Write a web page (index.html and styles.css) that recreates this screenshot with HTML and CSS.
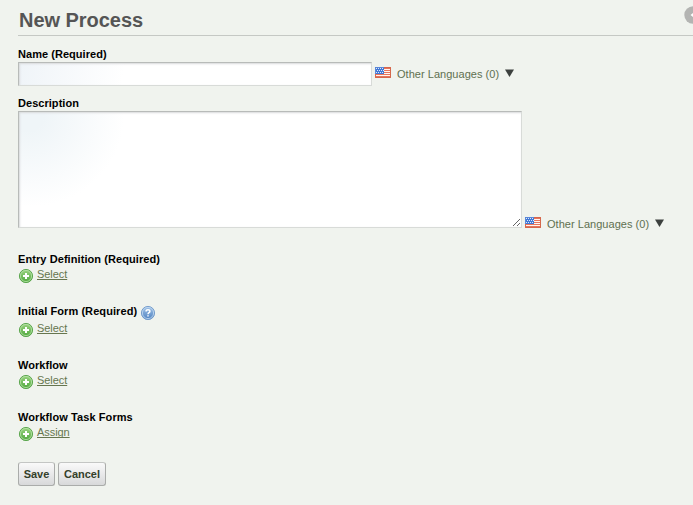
FILE: index.html
```html
<!DOCTYPE html>
<html lang="en">
<head>
<meta charset="utf-8">
<title>New Process</title>
<link rel="stylesheet" href="styles.css">
</head>
<body>
<svg class="defs" width="0" height="0" aria-hidden="true">
  <defs>
    <linearGradient id="green" x1="0" y1="0" x2="0" y2="1"><stop offset="0" stop-color="#9bd482"/><stop offset="1" stop-color="#4fa83d"/></linearGradient>
    <linearGradient id="blue" x1="0" y1="0" x2="0" y2="1"><stop offset="0" stop-color="#a4c5e8"/><stop offset="1" stop-color="#4d80c0"/></linearGradient>
    <symbol id="add" viewBox="0 0 16 16">
      <circle cx="8" cy="8" r="6.6" fill="url(#green)" stroke="#54a146" stroke-width=".9"/>
      <circle cx="8" cy="8" r="5.6" fill="none" stroke="#b9e2ab" stroke-width=".8"/>
      <path d="M8 5v6M5 8h6" stroke="#fff" stroke-width="2"/>
    </symbol>
    <symbol id="help" viewBox="0 0 16 16">
      <circle cx="8" cy="8" r="6.6" fill="url(#blue)" stroke="#6f98ca" stroke-width=".9"/>
      <circle cx="8" cy="8" r="5.6" fill="none" stroke="#c4daf1" stroke-width=".8"/>
      <path d="M6.1 6.5C6.1 4.3 9.9 4.3 9.9 6.5C9.9 7.8 8 7.7 8 9.2M8 10.2V11.6" fill="none" stroke="#fff" stroke-width="1.5"/>
    </symbol>
    <symbol id="flag" viewBox="0 0 16 11">
      <path fill="#e8735c" d="M0 0h16v11H0z"/>
      <path d="M1 2.5h14M1 4.5h14M1 6.5h14M1 8.5h14" stroke="#fff5ee"/>
      <path fill="#4277d5" d="M0 0h9v7H0z"/>
      <path d="M1 1.5h8M2 3.5h7M1 5.5h8" stroke="#dce8fb" stroke-dasharray="1 1"/>
      <path d="M.5 7v3.5h15V.5H9" fill="none" stroke="#d4674b"/>
      <path d="M.5 7V.5H9" fill="none" stroke="#5b88d8"/>
    </symbol>
    <symbol id="down" viewBox="0 0 9 8"><path d="M0 .5h9L4.5 8z" fill="#3c403e"/></symbol>
  </defs>
</svg>
<header class="header">
  <h1>New Process</h1>
  <svg class="back" viewBox="0 0 18 18"><circle cx="9" cy="9" r="8.7" fill="#b3b4b2"/><path d="M6.5 9l5-4v8z" fill="#fff"/></svg>
</header>
<form class="form">
  <div class="field name">
    <label for="name">Name (Required)</label>
    <div class="control">
      <input id="name" type="text">
      <svg class="flag"><use href="#flag"/></svg>
      <span class="lang">Other Languages (0)</span>
      <svg class="down"><use href="#down"/></svg>
    </div>
  </div>
  <div class="field description">
    <label for="desc">Description</label>
    <div class="control">
      <textarea id="desc"></textarea>
      <svg class="flag"><use href="#flag"/></svg>
      <span class="lang">Other Languages (0)</span>
      <svg class="down"><use href="#down"/></svg>
    </div>
  </div>
  <div class="field">
    <label class="wide">Entry Definition (Required)</label>
    <div class="action"><svg class="icon"><use href="#add"/></svg><a href="#">Select</a></div>
  </div>
  <div class="field initial">
    <div class="titled"><label class="wide">Initial Form (Required)</label><svg class="icon"><use href="#help"/></svg></div>
    <div class="action"><svg class="icon"><use href="#add"/></svg><a href="#">Select</a></div>
  </div>
  <div class="field">
    <label>Workflow</label>
    <div class="action"><svg class="icon"><use href="#add"/></svg><a href="#">Select</a></div>
  </div>
  <div class="field">
    <label class="wide">Workflow Task Forms</label>
    <div class="action"><svg class="icon"><use href="#add"/></svg><a href="#">Assign</a></div>
  </div>
  <div class="buttons"><button class="save" type="button">Save</button><button class="cancel" type="button">Cancel</button></div>
</form>
</body>
</html>
```
FILE: styles.css
```css
* { box-sizing: border-box; }
body {
  margin: 0;
  height: 505px;
  overflow: hidden;
  background: #f0f3ee;
  color: #000;
  font: 11px/14px "Liberation Sans", Arial, sans-serif;
}
svg { display: block; flex: none; }
.defs { position: absolute; }
.header {
  display: flex;
  justify-content: space-between;
  height: 36px;
  margin-left: 18px;
  border-bottom: 1px solid #c5c8c4;
}
h1 {
  margin: 9px 0 0 1px;
  font-size: 20px;
  line-height: 22px;
  letter-spacing: -0.04px;
  color: #555;
  white-space: nowrap;
}
.back { width: 18px; height: 18px; margin: 6px -9px 0 0; }
.form { padding: 11px 0 0 18px; }
.field { height: 52px; }
.name { height: 49px; }
.description { height: 156px; }
.initial { height: 54px; }
label { display: block; width: max-content; height: 15px; font-weight: bold; letter-spacing: 0.04px; white-space: nowrap; }
.wide { letter-spacing: 0.08px; }
.control { display: flex; }
input, textarea {
  display: block;
  flex: none;
  margin: 0;
  border: 1px solid #d8dbd8;
  border-top-color: #b8bbb9;
  border-left-color: #b8bbb9;
  border-radius: 0;
  outline: 0;
  box-shadow: inset 1px 1px 2px #d8dadb;
}
input { width: 354px; height: 24px; background: linear-gradient(100deg, #eff4f8, #fff 105px); }
textarea {
  width: 504px;
  height: 117px;
  background: radial-gradient(ellipse 95px 90px at 10px 5px, #eff5f8 15%, #fff);
}
.flag { width: 16px; height: 11px; margin: 5px 6px 0 3px; }
.lang { width: 102px; margin-top: 5px; color: #5f7050; letter-spacing: 0.03px; white-space: nowrap; }
.down { width: 9px; height: 8px; margin: 7px 0 0 6px; }
.description .flag { margin-top: 106px; }
.description .lang { margin-top: 106px; }
.description .down { margin-top: 108px; }
.action { display: flex; }
.icon { width: 16px; height: 16px; }
.action .icon { margin-top: 1px; }
.titled { display: flex; height: 17px; }
.titled .icon { margin: 1px 0 0 3px; }
a {
  height: 14px;
  margin-left: 3px;
  color: #66764f;
  letter-spacing: -0.06px;
  text-decoration: underline;
  text-underline-offset: 1px;
  text-decoration-skip-ink: none;
}
.buttons { display: flex; gap: 3px; }
button {
  height: 24px;
  padding: 0;
  border: 1px solid #aaacaa;
  border-top-color: #c4c6c4;
  border-radius: 3px;
  background: linear-gradient(#fafafa, #d8d9da);
  color: #34402a;
  font: bold 11px "Liberation Sans", Arial, sans-serif;
}
.save { width: 37px; }
.cancel { width: 48px; }
```
